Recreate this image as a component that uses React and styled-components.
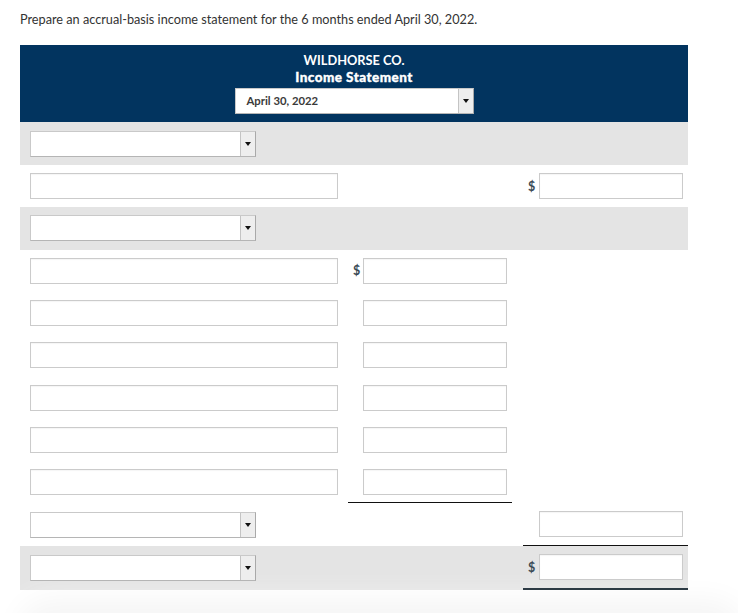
import React from "react";
import styled, { createGlobalStyle } from "styled-components";

const GlobalStyle = createGlobalStyle`
  html, body {
    margin: 0;
    padding: 0;
    background: #ffffff;
    font-family: Lato, "Open Sans", Arial, sans-serif;
    color: #333333;
  }
  * { box-sizing: border-box; }
`;

const Page = styled.div`
  padding: 0 0 0 20px;
  overflow: hidden;
  height: 613px;
`;

const Prompt = styled.p`
  margin: 0;
  padding-top: 10px;
  font-size: 12.7px;
  line-height: 18px;
  color: #333333;
`;

const Table = styled.div`
  width: 668px;
  margin-top: 17px;
`;

const Header = styled.div`
  background: #02345f;
  color: #ffffff;
  display: flex;
  flex-direction: column;
  align-items: center;
  padding: 7px 0 8px;
  height: 77px;
`;

const Company = styled.div`
  font-size: 12.8px;
  font-weight: 700;
  line-height: 17px;
`;

const Title = styled.div`
  font-size: 13.5px;
  font-weight: 900;
  letter-spacing: 0.45px;
  -webkit-text-stroke: 0.35px #ffffff;
  line-height: 17px;
`;

const Select = styled.div`
  width: ${(p) => p.$width}px;
  height: 26px;
  margin-top: ${(p) => p.$mt || 0}px;
  display: flex;
  background: #ffffff;
  border: 1px solid #c9c9c9;
  border-right-color: #a9a9a9;
  border-bottom-color: #b5b5b5;
`;

const SelectValue = styled.div`
  flex: 1;
  padding-left: 11px;
  font-size: 11.3px;
  font-weight: 700;
  line-height: 24px;
  color: #3a3a3a;
`;

const Caret = styled.div`
  width: 15px;
  background: #eeeeee;
  border-left: 1px solid #c4c4c4;
  display: flex;
  align-items: center;
  justify-content: center;
  &::after {
    content: "";
    border-left: 3px solid transparent;
    border-right: 3px solid transparent;
    border-top: 4px solid #111111;
  }
`;

const Row = styled.div`
  display: grid;
  grid-template-columns: 328px 164px 11px 165px;
  height: ${(p) => p.$h || 42.3}px;
  background: ${(p) => (p.$gray ? "#e4e4e4" : "#ffffff")};
`;

const LabelCell = styled.div`
  display: flex;
  align-items: center;
  padding-left: 10px;
`;

const AmountCell = styled.div`
  display: flex;
  align-items: center;
  padding: 0 5px;
  border-bottom: ${(p) => p.$rule || "none"};
`;

const Dollar = styled.span`
  width: ${(p) => p.$w || 10}px;
  font-size: 12.5px;
  color: #3b4a56;
  font-weight: 700;
`;

const Spacer = styled.span`
  width: ${(p) => p.$w || 10}px;
`;

const Field = styled.div`
  width: ${(p) => p.$width}px;
  height: 26px;
  background: #ffffff;
  border: 1px solid #cbcbcb;
  box-shadow: inset 0 1px 1px rgba(0, 0, 0, 0.04);
`;

const Shade = styled.div`
  margin: 26px 10px 0 14px;
  height: 60px;
  background: #f2f2f2;
  border-radius: 16px;
  box-shadow: 0 0 30px 16px #f5f5f5;
`;

function Dropdown({ width, value, mt }) {
  return (
    <Select $width={width} $mt={mt}>
      <SelectValue>{value}</SelectValue>
      <Caret />
    </Select>
  );
}

function Amount({ show, dollar, dw, rule }) {
  return (
    <AmountCell $rule={rule}>
      {show && (dollar ? <Dollar $w={dw}>$</Dollar> : <Spacer $w={dw} />)}
      {show && <Field $width={144} />}
    </AmountCell>
  );
}

const rows = [
  { gray: true, h: 43, label: "select" },
  { label: "input", c3: { dollar: true } },
  { gray: true, label: "select" },
  { label: "input", c2: { dollar: true } },
  { label: "input", c2: {} },
  { label: "input", c2: {} },
  { label: "input", c2: {} },
  { label: "input", c2: {} },
  { label: "input", c2: {}, rule2: "1px solid #111111" },
  { h: 43, label: "select", c3: {}, rule3: "1px solid #111111" },
  { gray: true, h: 44, label: "select", c3: { dollar: true }, rule3: "2px solid #2c3a44" },
];

export default function App() {
  return (
    <>
      <GlobalStyle />
      <Page>
        <Prompt>
          Prepare an accrual-basis income statement for the 6 months ended April 30, 2022.
        </Prompt>
        <Table>
          <Header>
            <Company>WILDHORSE CO.</Company>
            <Title>Income Statement</Title>
            <Dropdown width={239} value="April 30, 2022" mt={2} />
          </Header>
          {rows.map((r, i) => (
            <Row key={i} $gray={r.gray} $h={r.h}>
              <LabelCell>
                {r.label === "select" ? <Dropdown width={226} /> : <Field $width={308} />}
              </LabelCell>
              <Amount show={!!r.c2} dollar={r.c2 && r.c2.dollar} dw={10} rule={r.rule2} />
              <div />
              <Amount show={!!r.c3} dollar={r.c3 && r.c3.dollar} dw={11} rule={r.rule3} />
            </Row>
          ))}
        </Table>
        <Shade />
      </Page>
    </>
  );
}
